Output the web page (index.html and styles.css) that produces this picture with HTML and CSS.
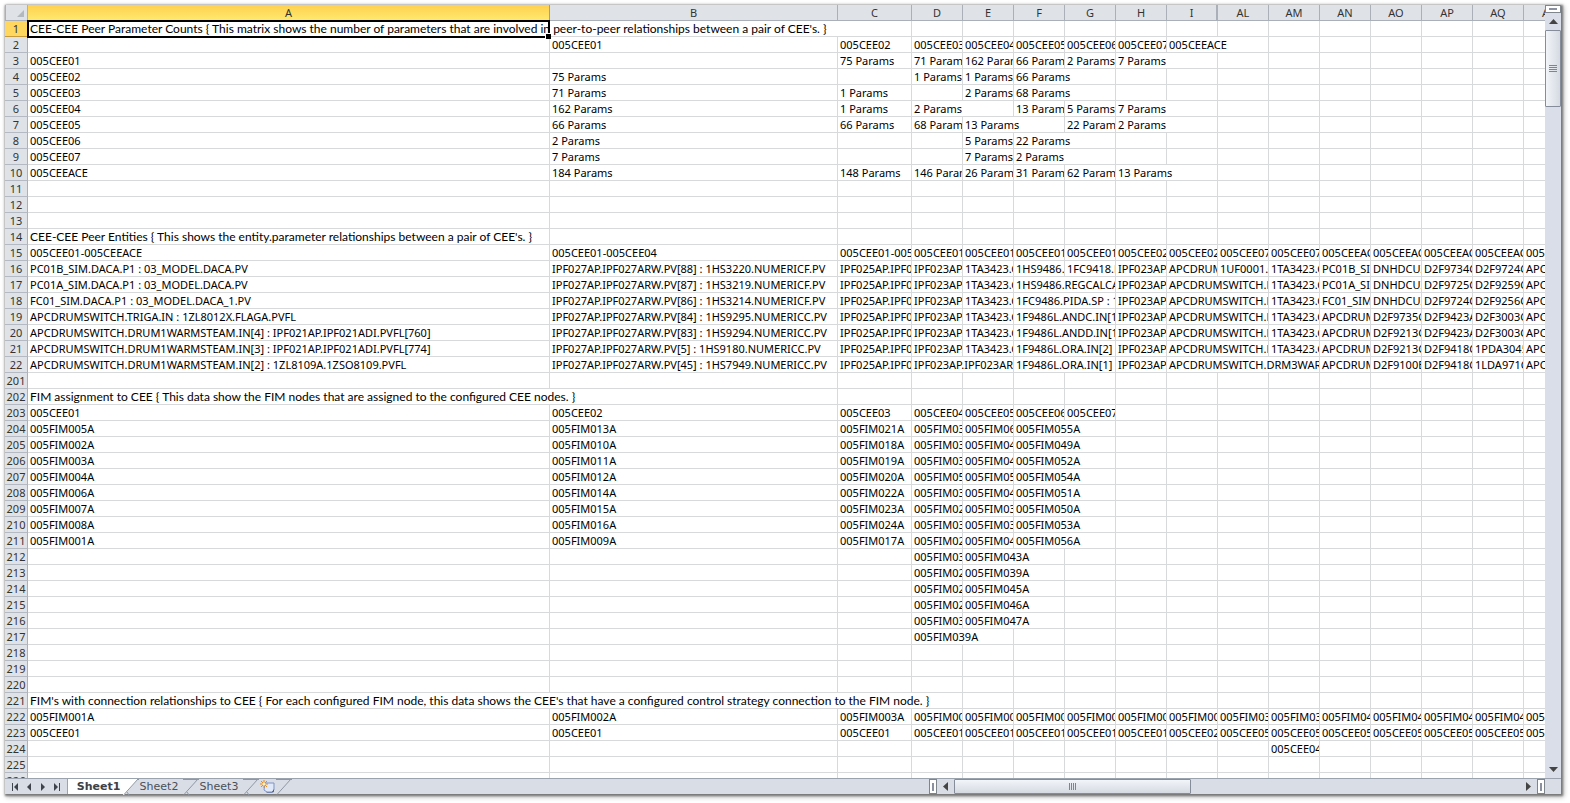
FILE: index.html
```
<!DOCTYPE html>
<html lang="en">
<head>
<meta charset="utf-8">
<title>CEE Peer Report</title>
<link rel="stylesheet" href="styles.css">
</head>
<body>
<main class="workbook">
  <div class="sheet-area">
    <div class="viewport">
      <table class="grid">
        <colgroup>
          <col class="c-head"><col class="c-a"><col class="c-b"><col class="c-c">
          <col class="c-n" span="13">
        </colgroup>
        <thead><tr id="columns"></tr></thead>
        <tbody id="rows"></tbody>
      </table>
    </div>
    <div class="vscroll">
      <button class="split split-h" type="button" aria-label="Split rows"></button>
      <button class="arrow" type="button" aria-label="Scroll up"><svg width="9" height="5" viewBox="0 0 9 5"><path d="M4.5 0L9 5H0z"/></svg></button>
      <div class="vthumb"><span class="grip grip-v"></span></div>
      <div class="vtrack"></div>
      <button class="arrow" type="button" aria-label="Scroll down"><svg width="9" height="5" viewBox="0 0 9 5"><path d="M0 0H9L4.5 5z"/></svg></button>
    </div>
  </div>
  <div class="bottom-bar">
    <nav class="tabs" aria-label="Sheets">
      <div class="tab-nav">
        <button type="button" aria-label="First sheet"><svg width="8" height="8" viewBox="0 0 8 8"><path d="M1 0H2V8H1zM7 0V8L3 4z"/></svg></button>
        <button type="button" aria-label="Previous sheet"><svg width="8" height="8" viewBox="0 0 8 8"><path d="M6 0V8L2 4z"/></svg></button>
        <button type="button" aria-label="Next sheet"><svg width="8" height="8" viewBox="0 0 8 8"><path d="M2 0V8L6 4z"/></svg></button>
        <button type="button" aria-label="Last sheet"><svg width="8" height="8" viewBox="0 0 8 8"><path d="M6 0H7V8H6zM1 0V8L5 4z"/></svg></button>
      </div>
      <button class="tab tab-on" type="button">Sheet1</button>
      <svg class="slant" width="16" height="16" viewBox="0 0 16 16"><path class="paper" d="M0 0H15L1 16H0z"/><path class="edge" d="M15 0L1 15.500M4 13L6 16M14 .5H16"/></svg>
      <button class="tab" type="button">Sheet2</button>
      <svg class="slant" width="16" height="16" viewBox="0 0 16 16"><path class="edge" d="M15 0L1 15.500M4 13L6 16M0 .5H16"/></svg>
      <button class="tab" type="button">Sheet3</button>
      <svg class="slant" width="16" height="16" viewBox="0 0 16 16"><path class="edge" d="M15 0L1 15.500M4 13L6 16M0 .5H16"/></svg>
      <button class="tab tab-new" type="button" aria-label="Insert sheet">
        <svg width="16" height="13" viewBox="0 0 16 13"><path d="M5 3H14V10L12 12H7L4 10z" fill="#dfe9fa" stroke="#7f93c4"/><path d="M6 12H12L14 9V11.500L13 12.500H7z" fill="#44598f"/><path d="M4 0V8M0 4H8M1 1L7 7M7 1L1 7" stroke="#e58a1c"/><circle cx="4" cy="4" r="1.500" fill="#fff3c4"/></svg>
      </button>
      <svg class="slant" width="16" height="16" viewBox="0 0 16 16"><path class="edge" d="M15 0L1 15.500M0 .5H16"/></svg>
    </nav>
    <div class="hscroll">
      <button class="split split-v" type="button" aria-label="Resize tabs"></button>
      <button class="harrow" type="button" aria-label="Scroll left"><svg width="5" height="9" viewBox="0 0 5 9"><path d="M5 0V9L0 4.500z"/></svg></button>
      <div class="hthumb"><span class="grip grip-h"></span></div>
      <div class="htrack"></div>
      <button class="harrow" type="button" aria-label="Scroll right"><svg width="5" height="9" viewBox="0 0 5 9"><path d="M0 0V9L5 4.500z"/></svg></button>
      <button class="split split-v" type="button" aria-label="Split columns"></button>
    </div>
    <div class="corner"></div>
  </div>
</main>
<script src="sheet.js"></script>
</body>
</html>
```
FILE: styles.css
```
* { box-sizing: border-box; }

body {
  margin: 0;
  padding: 5px 9px 9px 5px;
  height: 100vh;
  background: #fff;
  font-family: "Noto Sans", "Open Sans", sans-serif;
  font-size: 11px;
  color: #000;
}

button {
  margin: 0;
  padding: 0;
  border: 0;
  background: none;
  font: inherit;
  color: inherit;
  display: flex;
  align-items: center;
  justify-content: center;
}

.workbook {
  height: 100%;
  display: flex;
  flex-direction: column;
  box-shadow: 1px 1px 2px 1px #777, 2px 2px 5px 1px #bbb;
  background: #fff;
}

.sheet-area { flex: 1; min-height: 0; display: flex; }
.viewport { flex: 1; min-width: 0; overflow: hidden; }

.grid {
  table-layout: fixed;
  width: 1570px;
  border-collapse: separate;
  border-spacing: 0;
}
.c-head { width: 23px; }
.c-a { width: 522px; }
.c-b { width: 288px; }
.c-c { width: 74px; }
.c-n { width: 51px; }

.grid th, .grid td {
  height: 16px;
  padding: 0;
  line-height: 15px;
  white-space: nowrap;
  overflow: hidden;
  border-right: 1px solid #d8d9db;
  border-bottom: 1px solid #d8d9db;
}
.grid td { padding-left: 2px; text-align: left; }
.grid td.note { font-family: Lato, "Noto Sans", sans-serif; font-size: 12px; }
.grid th {
  background: #dfe3e8;
  border-color: #a9b0b8;
  color: #333;
  font-weight: 400;
  text-align: center;
}
.grid tbody th { border-bottom-color: #b4bac2; }
.grid thead th.hidden-after { border-right-width: 2px; }
.grid thead th.on {
  background: linear-gradient(#ffd04f, #ffe96e);
  border-color: #c79a3c;
}
.grid tbody th.on { background: #ffd75e; border-color: #c79a3c; }
.grid th.select-all { border-left: 1px solid #a9b0b8; }
.select-all svg { display: block; margin-left: 10px; }

.grid td.active { position: relative; overflow: visible; }
.cursor {
  position: absolute;
  left: -1px;
  top: -1px;
  width: 523px;
  height: 18px;
  border: 2px solid #000;
}
.cursor::after {
  content: "";
  position: absolute;
  right: -3px;
  bottom: -3px;
  width: 5px;
  height: 5px;
  background: #000;
  border-top: 1px solid #fff;
  border-left: 1px solid #fff;
}

.vscroll {
  width: 16px;
  display: flex;
  flex-direction: column;
  align-items: stretch;
  background: #d9dee8;
}
.arrow { height: 17px; fill: #444; }
.split { background: #fff; border: 1px solid #7f858d; }
.split-h { height: 8px; }
.split-h::after { content: ""; width: 8px; height: 2px; background: #8a90a0; }
.vthumb {
  height: 77px;
  border: 1px solid #858d9a;
  border-radius: 1px;
  background: linear-gradient(90deg, #f2f5f9, #d5dae2);
  display: flex;
  align-items: center;
  justify-content: center;
}
.vtrack { flex: 1; }
.grip-v { width: 8px; height: 7px; background: repeating-linear-gradient(#80858c 0 1px, transparent 1px 2px); }

.bottom-bar {
  height: 16px;
  display: flex;
  border-top: 1px solid #9aa3ae;
  background: #d9dee6;
}
.tabs { flex: 1; min-width: 0; display: flex; }
.tab-nav {
  width: 63px;
  display: flex;
  align-items: center;
  justify-content: space-evenly;
  border-right: 1px solid #9aa3ae;
  fill: #3f444c;
}
.tab {
  width: 44px;
  padding-right: 4px;
  font-family: "DejaVu Sans", sans-serif;
  line-height: 15px;
  color: #4a4f58;
}
.tab-on { width: 55px; padding: 0 0 0 6px; font-weight: 700; background: #fff; color: #3c4149; }
.tab-new { width: 17px; padding: 0; }
.slant { flex: none; }
.slant .paper { fill: #fff; }
.slant .edge { fill: none; stroke: #8f97a3; }

.hscroll { width: 616px; display: flex; }
.split-v { width: 8px; }
.split-v::after { content: ""; width: 2px; height: 8px; background: #8a90a0; }
.harrow { width: 17px; fill: #444; }
.hthumb {
  width: 237px;
  border: 1px solid #858d9a;
  border-radius: 1px;
  background: linear-gradient(#f2f5f9, #d5dae2);
  display: flex;
  align-items: center;
  justify-content: center;
}
.htrack { flex: 1; }
.grip-h { width: 7px; height: 7px; background: repeating-linear-gradient(90deg, #80858c 0 1px, transparent 1px 2px); }
.corner { width: 16px; }
```
FILE: sheet.js
```
const columns = ["A", "B", "C", "D", "E", "F", "G", "H", "I", "AL", "AM", "AN", "AO", "AP", "AQ", "AR"];

// Each row lists its cells from column A; "text>n" lets the text run over n columns.
const data = {
  1: "CEE-CEE Peer Parameter Counts { This matrix shows the number of parameters that are involved in peer-to-peer relationships between a pair of CEE's. }>3",
  2: "|005CEE01|005CEE02|005CEE03|005CEE04|005CEE05|005CEE06|005CEE07|005CEEACE>2",
  3: "005CEE01||75 Params|71 Param|162 Paran|66 Param|2 Params|7 Params>2",
  4: "005CEE02|75 Params||1 Params|1 Params|66 Params>2",
  5: "005CEE03|71 Params|1 Params||2 Params|68 Params>2",
  6: "005CEE04|162 Params|1 Params|2 Params>2|13 Param|5 Params|7 Params>2",
  7: "005CEE05|66 Params|66 Params|68 Param|13 Params>2|22 Param|2 Params>2",
  8: "005CEE06|2 Params|||5 Params|22 Params>2",
  9: "005CEE07|7 Params|||7 Params|2 Params>2",
  10: "005CEEACE|184 Params|148 Params|146 Param|26 Param|31 Param|62 Param|13 Params>2",
  14: "CEE-CEE Peer Entities { This shows the entity.parameter relationships between a pair of CEE's. }",
  15: "005CEE01-005CEEACE|005CEE01-005CEE04|005CEE01-005C|005CEE01|005CEE01|005CEE01|005CEE01|005CEE02|005CEE02|005CEE07|005CEE07|005CEEAC|005CEEAC|005CEEAC|005CEEAC|005C",
  16: "PC01B_SIM.DACA.P1 : 03_MODEL.DACA.PV|IPF027AP.IPF027ARW.PV[88] : 1HS3220.NUMERICF.PV|IPF025AP.IPF0|IPF023AP.|1TA3423.C|1HS9486.S|1FC9418.P|IPF023AP.|APCDRUM|1UF0001.C|1TA3423.C|PC01B_SI|DNHDCUZ|D2F9734C|D2F9724C|APC",
  17: "PC01A_SIM.DACA.P1 : 03_MODEL.DACA.PV|IPF027AP.IPF027ARW.PV[87] : 1HS3219.NUMERICF.PV|IPF025AP.IPF0|IPF023AP.|1TA3423.C|1HS9486.REGCALCA>2|IPF023AP.|APCDRUMSWITCH.D>2|1TA3423.C|PC01A_SI|DNHDCUZ|D2F9725C|D2F9259C|APC",
  18: "FC01_SIM.DACA.P1 : 03_MODEL.DACA_1.PV|IPF027AP.IPF027ARW.PV[86] : 1HS3214.NUMERICF.PV|IPF025AP.IPF0|IPF023AP.|1TA3423.C|1FC9486.PIDA.SP : 1>2|IPF023AP.|APCDRUMSWITCH.D>2|1TA3423.C|FC01_SIM|DNHDCUZ|D2F9724C|D2F9256C|APC",
  19: "APCDRUMSWITCH.TRIGA.IN : 1ZL8012X.FLAGA.PVFL|IPF027AP.IPF027ARW.PV[84] : 1HS9295.NUMERICC.PV|IPF025AP.IPF0|IPF023AP.|1TA3423.C|1F9486L.ANDC.IN[1]>2|IPF023AP.|APCDRUMSWITCH.D>2|1TA3423.C|APCDRUM|D2F9735C|D2F9423A|D2F3003C|APC",
  20: "APCDRUMSWITCH.DRUM1WARMSTEAM.IN[4] : IPF021AP.IPF021ADI.PVFL[760]|IPF027AP.IPF027ARW.PV[83] : 1HS9294.NUMERICC.PV|IPF025AP.IPF0|IPF023AP.|1TA3423.C|1F9486L.ANDD.IN[1>2|IPF023AP.|APCDRUMSWITCH.D>2|1TA3423.C|APCDRUM|D2F9213C|D2F9423A|D2F3003C|APC",
  21: "APCDRUMSWITCH.DRUM1WARMSTEAM.IN[3] : IPF021AP.IPF021ADI.PVFL[774]|IPF027AP.IPF027ARW.PV[5] : 1HS9180.NUMERICC.PV|IPF025AP.IPF0|IPF023AP.|1TA3423.C|1F9486L.ORA.IN[2]>2|IPF023AP.|APCDRUMSWITCH.D>2|1TA3423.C|APCDRUM|D2F9213C|D2F9418C|1PDA3045|APC",
  22: "APCDRUMSWITCH.DRUM1WARMSTEAM.IN[2] : 1ZL8109A.1ZSO8109.PVFL|IPF027AP.IPF027ARW.PV[45] : 1HS7949.NUMERICC.PV|IPF025AP.IPF0|IPF023AP.IPF023AR>2|1F9486L.ORA.IN[1]>2|IPF023AP.|APCDRUMSWITCH.DRM3WAR>3|APCDRUM|D2F9100B|D2F9418C|1LDA971C|APC",
  202: "FIM assignment to CEE { This data show the FIM nodes that are assigned to the configured CEE nodes. }>2",
  203: "005CEE01|005CEE02|005CEE03|005CEE04|005CEE05|005CEE06|005CEE07",
  204: "005FIM005A|005FIM013A|005FIM021A|005FIM03|005FIM06|005FIM055A>2",
  205: "005FIM002A|005FIM010A|005FIM018A|005FIM03|005FIM04|005FIM049A>2",
  206: "005FIM003A|005FIM011A|005FIM019A|005FIM03|005FIM04|005FIM052A>2",
  207: "005FIM004A|005FIM012A|005FIM020A|005FIM05|005FIM05|005FIM054A>2",
  208: "005FIM006A|005FIM014A|005FIM022A|005FIM03|005FIM04|005FIM051A>2",
  209: "005FIM007A|005FIM015A|005FIM023A|005FIM02|005FIM03|005FIM050A>2",
  210: "005FIM008A|005FIM016A|005FIM024A|005FIM03|005FIM03|005FIM053A>2",
  211: "005FIM001A|005FIM009A|005FIM017A|005FIM02|005FIM04|005FIM056A>2",
  212: "|||005FIM03|005FIM043A>2",
  213: "|||005FIM02|005FIM039A>2",
  214: "|||005FIM02|005FIM045A>2",
  215: "|||005FIM02|005FIM046A>2",
  216: "|||005FIM03|005FIM047A>2",
  217: "|||005FIM039A>2",
  221: "FIM's with connection relationships to CEE { For each configured FIM node, this data shows the CEE's that have a configured control strategy connection to the FIM node. }>4",
  222: "005FIM001A|005FIM002A|005FIM003A|005FIM00|005FIM00|005FIM00|005FIM00|005FIM00|005FIM00|005FIM03|005FIM03|005FIM04|005FIM04|005FIM04|005FIM04|005",
  223: "005CEE01|005CEE01|005CEE01|005CEE01|005CEE01|005CEE01|005CEE01|005CEE01|005CEE02|005CEE05|005CEE05|005CEE05|005CEE05|005CEE05|005CEE05|005C",
  224: "||||||||||005CEE04"
};

const head = document.getElementById("columns");
head.innerHTML = '<th class="select-all"><svg width="8" height="8" viewBox="0 0 8 8"><path d="M8 1V8H1z" fill="#b3b8bf"/></svg></th>';
columns.forEach(name => {
  const th = document.createElement("th");
  th.scope = "col";
  th.textContent = name;
  if (name === "A") th.className = "on";
  if (name === "I") th.className = "hidden-after";
  head.append(th);
});

const body = document.getElementById("rows");
const addRow = number => {
  const tr = document.createElement("tr");
  const th = document.createElement("th");
  th.scope = "row";
  th.textContent = number;
  if (number === 1) th.className = "on";
  tr.append(th);
  const cells = data[number] ? data[number].split("|") : [];
  for (let column = 0, i = 0; column < columns.length; i++) {
    const [text, span] = (cells[i] || "").split(">");
    const td = document.createElement("td");
    td.textContent = text;
    td.colSpan = Number(span || 1);
    if (text.includes("{")) td.className = "note";
    if (number === 1 && column === 0) {
      td.classList.add("active");
      const cursor = document.createElement("span");
      cursor.className = "cursor";
      td.append(cursor);
    }
    tr.append(td);
    column += td.colSpan;
  }
  body.append(tr);
};
for (let n = 1; n <= 22; n++) addRow(n);
for (let n = 201; n <= 226; n++) addRow(n);
```
